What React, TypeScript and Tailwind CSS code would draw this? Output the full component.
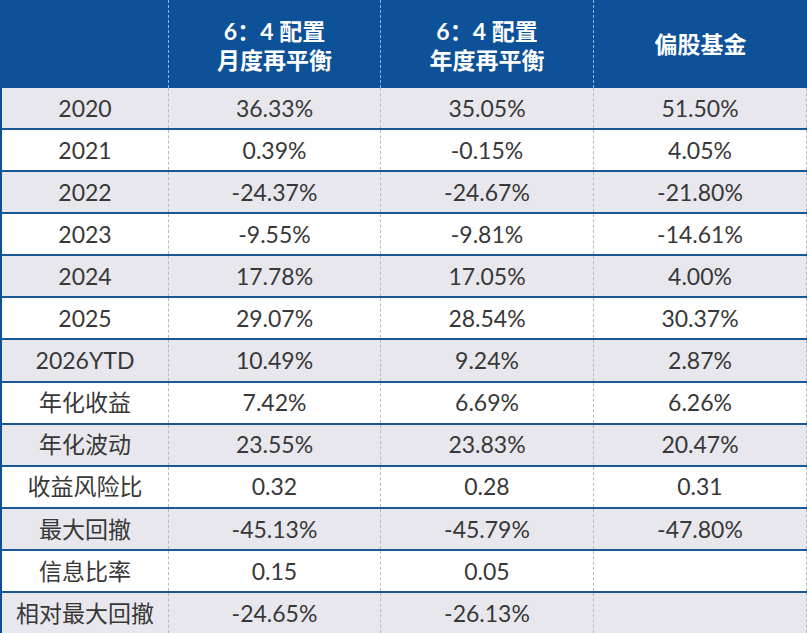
import React from "react";

const rows: [string, string, string, string][] = [
  ["2020", "36.33%", "35.05%", "51.50%"],
  ["2021", "0.39%", "-0.15%", "4.05%"],
  ["2022", "-24.37%", "-24.67%", "-21.80%"],
  ["2023", "-9.55%", "-9.81%", "-14.61%"],
  ["2024", "17.78%", "17.05%", "4.00%"],
  ["2025", "29.07%", "28.54%", "30.37%"],
  ["2026YTD", "10.49%", "9.24%", "2.87%"],
  ["年化收益", "7.42%", "6.69%", "6.26%"],
  ["年化波动", "23.55%", "23.83%", "20.47%"],
  ["收益风险比", "0.32", "0.28", "0.31"],
  ["最大回撤", "-45.13%", "-45.79%", "-47.80%"],
  ["信息比率", "0.15", "0.05", ""],
  ["相对最大回撤", "-24.65%", "-26.13%", ""],
];

const font = { fontFamily: '"Lato", "Noto Sans CJK SC", sans-serif' };

export default function App() {
  return (
    <div
      className="flex h-[633px] w-[807px] flex-col border-l-2 border-[#0d4f98] bg-white text-[#383838]"
      style={font}
    >
      <div className="grid h-[88px] shrink-0 grid-cols-[166px_212px_213px_1fr] bg-[#0d5199] text-[23px] font-bold leading-[29px] text-white">
        <div />
        <div className="flex flex-col items-center justify-center border-l border-dashed border-[#8ab8e6] pt-1">
          <span>6：4 配置</span>
          <span>月度再平衡</span>
        </div>
        <div className="flex flex-col items-center justify-center border-l border-dashed border-[#8ab8e6] pt-1">
          <span>6：4 配置</span>
          <span>年度再平衡</span>
        </div>
        <div className="flex items-center justify-center border-l border-dashed border-[#8ab8e6]">
          偏股基金
        </div>
      </div>
      {rows.map((r, i) => (
        <div
          key={r[0]}
          className={`grid flex-1 grid-cols-[166px_212px_213px_1fr] text-[23px] ${
            i > 0 ? "border-t-2 border-[#1a5793]" : ""
          } ${i % 2 === 0 ? "bg-[#e7e7ed]" : "bg-white"}`}
        >
          {r.map((c, j) => (
            <div
              key={j}
              className={`flex items-center justify-center ${
                j > 0 ? "border-l border-dashed border-[#b8b8c0]" : ""
              } ${j === 3 ? "border-r border-r-[#b8b8c0]" : ""}`}
            >
              {c}
            </div>
          ))}
        </div>
      ))}
    </div>
  );
}
